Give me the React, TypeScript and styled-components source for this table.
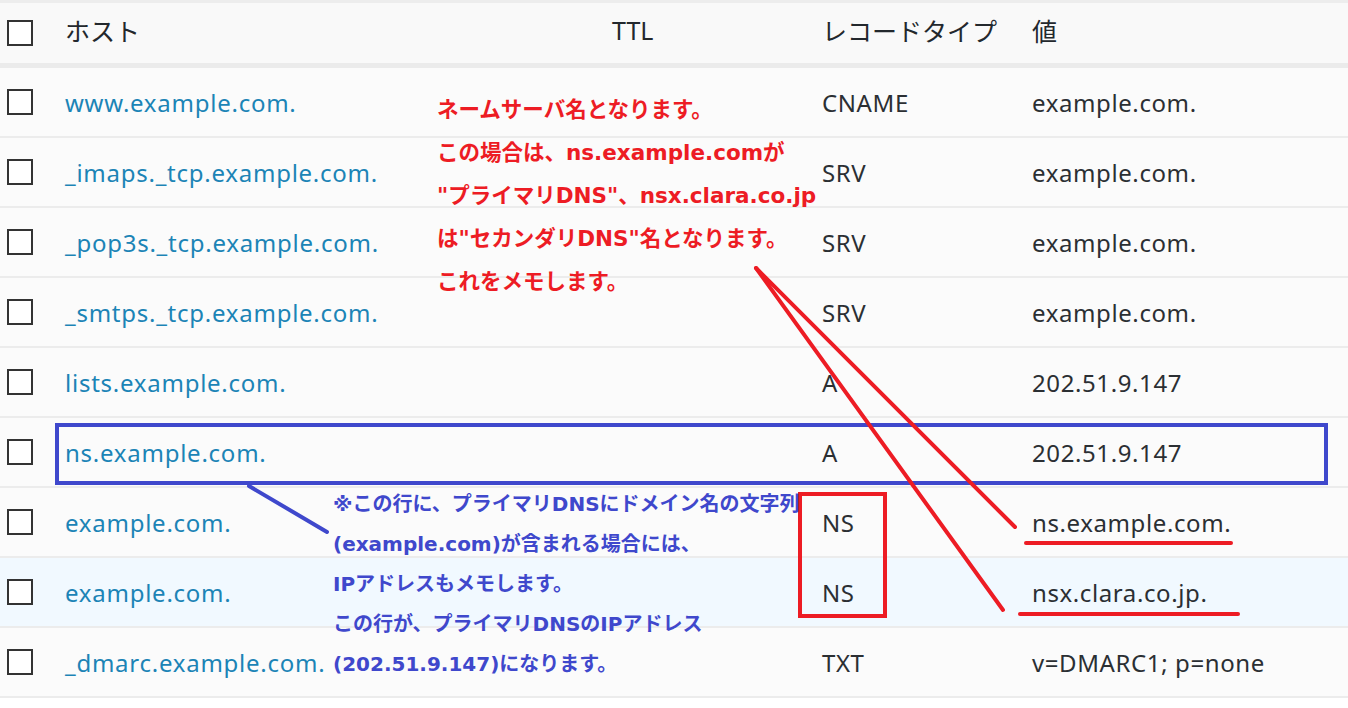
import React from 'react';
import styled, { createGlobalStyle } from 'styled-components';

const rows = [
  { host: 'www.example.com.', type: 'CNAME', value: 'example.com.' },
  { host: '_imaps._tcp.example.com.', type: 'SRV', value: 'example.com.' },
  { host: '_pop3s._tcp.example.com.', type: 'SRV', value: 'example.com.' },
  { host: '_smtps._tcp.example.com.', type: 'SRV', value: 'example.com.' },
  { host: 'lists.example.com.', type: 'A', value: '202.51.9.147' },
  { host: 'ns.example.com.', type: 'A', value: '202.51.9.147' },
  { host: 'example.com.', type: 'NS', value: 'ns.example.com.' },
  { host: 'example.com.', type: 'NS', value: 'nsx.clara.co.jp.', hover: true },
  { host: '_dmarc.example.com.', type: 'TXT', value: 'v=DMARC1; p=none' },
];

const redNote = [
  'ネームサーバ名となります。',
  'この場合は、ns.example.comが',
  '"プライマリDNS"、nsx.clara.co.jp',
  'は"セカンダリDNS"名となります。',
  'これをメモします。',
];

const blueNote = [
  '※この行に、プライマリDNSにドメイン名の文字列',
  '(example.com)が含まれる場合には、',
  'IPアドレスもメモします。',
  'この行が、プライマリDNSのIPアドレス',
  '(202.51.9.147)になります。',
];

export default function App() {
  return (
    <>
      <GlobalStyle />
      <S_Wrap>
        <S_Table>
          <S_Head>
            <S_Cell><S_Check /></S_Cell>
            <S_HeadText>ホスト</S_HeadText>
            <S_HeadText $pad={70}>TTL</S_HeadText>
            <S_HeadText>レコードタイプ</S_HeadText>
            <S_HeadText>値</S_HeadText>
          </S_Head>
          {rows.map((r, i) => (
            <S_Row key={i} $hover={!!r.hover}>
              <S_Cell><S_Check /></S_Cell>
              <S_Host>{r.host}</S_Host>
              <S_Cell />
              <S_Text>{r.type}</S_Text>
              <S_Text>{r.value}</S_Text>
            </S_Row>
          ))}
        </S_Table>

        <S_Overlay width="1348" height="708" viewBox="0 0 1348 708">
          <rect x="57" y="425" width="1269" height="58" fill="none" stroke="#3f48cc" strokeWidth="4" />
          <line x1="249" y1="486" x2="327" y2="532" stroke="#3f48cc" strokeWidth="4" strokeLinecap="round" />
          <rect x="800" y="494" width="85" height="122" fill="none" stroke="#ed1c24" strokeWidth="4" />
          <line x1="756" y1="268" x2="1015" y2="527" stroke="#ed1c24" strokeWidth="4" strokeLinecap="round" />
          <line x1="756" y1="268" x2="1003" y2="610" stroke="#ed1c24" strokeWidth="4" strokeLinecap="round" />
          <line x1="1026" y1="543" x2="1231" y2="543" stroke="#ed1c24" strokeWidth="4" strokeLinecap="round" />
          <line x1="1020" y1="614" x2="1238" y2="614" stroke="#ed1c24" strokeWidth="4" strokeLinecap="round" />
        </S_Overlay>

        <S_RedNote>
          {redNote.map((l, i) => (
            <div key={i}>{l}</div>
          ))}
        </S_RedNote>
        <S_BlueNote>
          {blueNote.map((l, i) => (
            <div key={i}>{l}</div>
          ))}
        </S_BlueNote>
      </S_Wrap>
    </>
  );
}

const GlobalStyle = createGlobalStyle`
  body {
    margin: 0;
    background: #ffffff;
    font-family: 'Noto Sans', 'Noto Sans CJK JP', sans-serif;
  }
`;

const S_Wrap = styled.div`
  position: relative;
  width: 1348px;
  height: 708px;
  overflow: hidden;
`;

const S_Table = styled.div`
  display: flex;
  flex-direction: column;
  border-top: 3px solid #ededed;
`;

const COLS = '58px 477px 280px 210px 1fr';

const S_Head = styled.div`
  display: grid;
  grid-template-columns: ${COLS};
  align-items: center;
  height: 60px;
  padding-left: 7px;
  background: #f9f9f9;
  border-bottom: 5px solid #ebebeb;
`;

const S_Row = styled.div<{ $hover: boolean }>`
  display: grid;
  grid-template-columns: ${COLS};
  align-items: center;
  height: 68px;
  padding-left: 7px;
  background: ${(p) => (p.$hover ? '#f1f9ff' : '#fbfbfb')};
  border-bottom: 2px solid #ececec;
`;

const S_Cell = styled.div`
  display: flex;
  align-items: center;
`;

const S_Check = styled.span`
  display: block;
  width: 22px;
  height: 22px;
  border: 2px solid #333;
  background: #fff;
`;

const S_HeadText = styled.div<{ $pad?: number }>`
  padding-left: ${(p) => p.$pad ?? 0}px;
  margin-bottom: 6px;
  font-size: 25px;
  color: #23282d;
  white-space: nowrap;
`;

const S_Host = styled.div`
  font-size: 24px;
  letter-spacing: 0.75px;
  color: #1c84b6;
  white-space: nowrap;
`;

const S_Text = styled.div`
  font-size: 24px;
  letter-spacing: 0.6px;
  color: #2b2f33;
  white-space: nowrap;
`;

const S_Overlay = styled.svg`
  position: absolute;
  left: 0;
  top: 0;
  pointer-events: none;
`;

const NOTE_FONT = `'DejaVu Sans', 'Noto Sans CJK JP', sans-serif`;

const S_RedNote = styled.div`
  position: absolute;
  left: 437px;
  top: 88px;
  font-family: ${NOTE_FONT};
  font-size: 21.5px;
  line-height: 43px;
  font-weight: 700;
  color: #ed1c24;
  white-space: nowrap;
`;

const S_BlueNote = styled.div`
  position: absolute;
  left: 333px;
  top: 484px;
  font-family: ${NOTE_FONT};
  font-size: 20px;
  line-height: 40px;
  font-weight: 700;
  color: #3f48cc;
  white-space: nowrap;
`;
